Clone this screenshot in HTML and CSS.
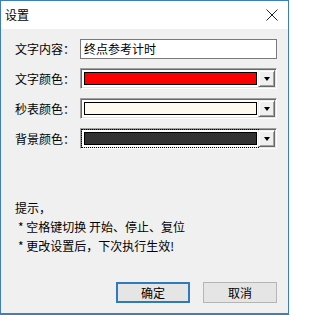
FILE: index.html
```html
<!DOCTYPE html>
<html lang="zh">
<head>
<meta charset="utf-8">
<title>设置</title>
<link rel="stylesheet" href="styles.css">
</head>
<body>
<div class="window">
  <div class="titlebar">
    <span class="title">设置</span>
    <svg class="close" width="12" height="12" viewBox="0 0 12 12"><path d="M0.5 0.5 L11.5 11.5 M11.5 0.5 L0.5 11.5" stroke="#222" stroke-width="1" fill="none"/></svg>
  </div>
  <div class="content">
    <div class="form">
      <label class="label">文字内容：</label>
      <div class="input">终点参考计时</div>

      <label class="label">文字颜色：</label>
      <div class="combo">
        <div class="field"><div class="swatch red"></div></div>
        <div class="drop"><span class="arrow"></span></div>
      </div>

      <label class="label">秒表颜色：</label>
      <div class="combo">
        <div class="field"><div class="swatch cream"></div></div>
        <div class="drop"><span class="arrow"></span></div>
      </div>

      <label class="label">背景颜色：</label>
      <div class="combo focused">
        <div class="field"><div class="swatch dark"></div></div>
        <div class="drop"><span class="arrow"></span></div>
      </div>
    </div>

    <div class="hints">
      <div class="hint-title">提示，</div>
      <div class="hint">* 空格键切换 开始、停止、复位</div>
      <div class="hint">* 更改设置后，下次执行生效!</div>
    </div>

    <div class="buttons">
      <button class="btn default">确定</button>
      <button class="btn">取消</button>
    </div>
  </div>
</div>
</body>
</html>
```
FILE: styles.css
```css
html, body {
  margin: 0;
  padding: 0;
}
body {
  width: 289px;
  height: 315px;
  overflow: hidden;
  font-family: "Noto Sans CJK SC", "Liberation Sans", sans-serif;
  font-size: 12px;
  color: #000;
}
.window {
  box-sizing: border-box;
  width: 289px;
  height: 315px;
  border: 1px solid #3d7fbd;
  border-bottom-width: 2px;
  background: #f0f0f0;
  display: flex;
  flex-direction: column;
}
.titlebar {
  height: 28px;
  background: #fff;
  display: flex;
  align-items: center;
  justify-content: space-between;
  padding: 0 10px 0 4px;
  flex: none;
}
.title {
  font-size: 12px;
  line-height: 14px;
  color: #000;
}
.close {
  display: block;
}
.content {
  flex: 1;
  display: flex;
  flex-direction: column;
  padding: 9px 11px 0 14px;
}
.form {
  display: grid;
  grid-template-columns: 65px 197px;
  grid-auto-rows: 21px;
  row-gap: 9px;
  align-items: center;
}
.label {
  line-height: 14px;
  white-space: nowrap;
}
.input {
  box-sizing: border-box;
  height: 20px;
  background: #fff;
  border: 1px solid #7a7a7a;
  padding: 0 3px;
  line-height: 18px;
  font-size: 12px;
}
.combo {
  box-sizing: border-box;
  height: 21px;
  display: flex;
  border-top: 1px solid #a0a0a0;
  border-left: 1px solid #a0a0a0;
  border-right: 1px solid #fff;
  border-bottom: 1px solid #fff;
  box-shadow: inset 1px 1px 0 #696969, inset -1px -1px 0 #e3e3e3;
  padding: 1px;
  background: #fff;
}
.field {
  flex: 1;
  box-sizing: border-box;
  padding: 2px 1px 2px 2px;
  display: flex;
}
.combo.focused .field {
  outline: 1px dotted #000;
  outline-offset: 0;
}
.swatch {
  flex: 1;
  border: 1px solid #000;
}
.red { background: #ff0000; }
.cream { background: #fffaf0; }
.dark { background: #333333; }
.drop {
  width: 17px;
  flex: none;
  box-sizing: border-box;
  background: #f0f0f0;
  border-left: 1px solid #f0f0f0;
  border-top: 1px solid #f0f0f0;
  border-right: 1px solid #696969;
  border-bottom: 1px solid #696969;
  box-shadow: inset 1px 1px 0 #fff, inset -1px -1px 0 #a0a0a0;
  display: flex;
  align-items: center;
  justify-content: center;
}
.arrow {
  width: 0;
  height: 0;
  border-left: 3.5px solid transparent;
  border-right: 3.5px solid transparent;
  border-top: 4px solid #000;
}
.hints {
  margin-top: 49px;
  line-height: 19px;
}
.hint {
  padding-left: 3px;
}
.buttons {
  margin-top: auto;
  margin-bottom: 10px;
  display: flex;
  justify-content: flex-end;
  gap: 13px;
}
.btn {
  box-sizing: border-box;
  width: 74px;
  height: 21px;
  font-family: "Noto Sans CJK SC", "Liberation Sans", sans-serif;
  font-size: 12px;
  line-height: 17px;
  padding: 0;
  background: #e5e5e5;
  border: 1px solid #b5b5b5;
  color: #000;
}
.btn.default {
  border: 2px solid #2f7ab9;
}
```
